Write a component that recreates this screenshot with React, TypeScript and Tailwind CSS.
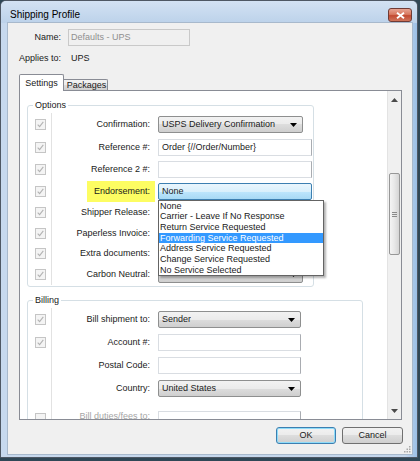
import clsx from "clsx";
import type { ReactNode } from "react";

const endorsements = [
  "None",
  "Carrier - Leave If No Response",
  "Return Service Requested",
  "Forwarding Service Requested",
  "Address Service Requested",
  "Change Service Requested",
  "No Service Selected",
];

function Check({ state }: { state: "on" | "off" | "none" }) {
  if (state === "none") return null;
  return (
    <span className="flex h-[11px] w-[11px] items-center justify-center border border-[#c5c5c5] bg-[#f4f4f4]">
      {state === "on" && (
        <svg width="7" height="7" viewBox="0 0 7 7">
          <path d="M0.7 3.6L2.6 5.6L6.3 0.9" fill="none" stroke="#b3b3b3" strokeWidth="1.1" />
        </svg>
      )}
    </span>
  );
}

function DownArrow({ color = "#000" }: { color?: string }) {
  return (
    <svg width="7" height="4" viewBox="0 0 7 4">
      <path d="M0 0H7L3.5 4Z" fill={color} />
    </svg>
  );
}

function Combo({ value = "", className, open }: { value?: string; className?: string; open?: boolean }) {
  return (
    <div
      className={clsx(
        "flex h-[17px] items-center justify-between rounded-[2px] border pl-[3px] pr-[5px]",
        open
          ? "border-[#3c7fb1] bg-[linear-gradient(#eaf6fd,#d9f0fc_50%,#bee6fd_50%,#a7d9f5)]"
          : "border-[#8e8f8f] bg-[linear-gradient(#f2f2f2,#ebebeb_50%,#dddddd_50%,#cfcfcf)]",
        className
      )}
    >
      <span className="truncate">{value}</span>
      {!open && <DownArrow />}
    </div>
  );
}

function Field({ value = "", className }: { value?: string; className?: string }) {
  return (
    <div
      className={clsx(
        "flex h-[17px] items-center border border-[#d9dde2] border-r-[#a9acb1] bg-white pl-[3px]",
        className
      )}
    >
      {value}
    </div>
  );
}

function Row({
  label,
  h,
  children,
  check = "on",
  highlight,
  bottom,
  muted,
}: {
  label: string;
  h: string;
  children: ReactNode;
  check?: "on" | "off" | "none";
  highlight?: boolean;
  bottom?: boolean;
  muted?: boolean;
}) {
  const align = bottom ? "items-end" : "items-center";
  return (
    <div className={clsx("flex", h)}>
      <div className={clsx("flex w-[23px] pl-[7px]", align, bottom && "pb-[4px]")}>
        <Check state={check} />
      </div>
      <div className={clsx("flex flex-1 border-l border-[#e2e2e2]", align)}>
        <div className={clsx("flex w-[103px] justify-end", bottom && "mb-[6px]")}>
          <span
            className={clsx(
              "flex items-center pr-[5px]",
              highlight && "h-[21px] bg-[#fdfd62] pl-[7px]",
              muted && "text-[#a5a5a5]"
            )}
          >
            {label}
          </span>
        </div>
        <div className="relative ml-[3px]">{children}</div>
      </div>
    </div>
  );
}

function Group({ title, className, children }: { title: string; className: string; children: ReactNode }) {
  return (
    <fieldset className={clsx("rounded-[3px] border border-[#d5dfe5] px-0 pb-[1px] pt-[2px]", className)}>
      <legend className="ml-[5px] px-[2px] leading-[11px]">{title}</legend>
      {children}
    </fieldset>
  );
}

function Button({ label, primary }: { label: string; primary?: boolean }) {
  return (
    <div
      className={clsx(
        "flex h-[17px] items-center justify-center rounded-[3px] border bg-[linear-gradient(#f2f2f2,#ebebeb_50%,#dddddd_50%,#cfcfcf)]",
        primary
          ? "w-[60px] border-[#3c7fb1] shadow-[inset_0_0_0_1px_#8fdcf9]"
          : "w-[61px] border-[#707070]"
      )}
    >
      {label}
    </div>
  );
}

export default function App() {
  return (
    <div className="h-[461px] w-[420px] overflow-hidden bg-[#2f4756] font-['Liberation_Sans',Arial,sans-serif] text-[9px] leading-[11px] text-[#1a1a1a]">
      <div className="flex h-[458px] w-[418px] flex-col rounded-t-[6px] border border-[#4f5864] bg-[linear-gradient(90deg,#c7d9ee,#c3d6ec_97%,#9cc0e6)]">
        {/* title bar */}
        <div className="flex h-[22px] items-start justify-between rounded-t-[5px] bg-[linear-gradient(#d3e2f3,#bcd2ea)]">
          <span className="pl-[9px] pt-[8px] text-[10px] leading-[12px] text-black">Shipping Profile</span>
          <div className="mr-[5px] mt-[7px] flex h-[14px] w-[24px] items-center justify-center rounded-[3px] border border-[#6f3b35] bg-[linear-gradient(#e8a493,#d7785f_45%,#c24a32_55%,#d0745a)]">
            <svg width="9" height="7" viewBox="0 0 9 7">
              <path d="M1 0.8L8 6.2M8 0.8L1 6.2" stroke="#fff" strokeWidth="1.9" />
            </svg>
          </div>
        </div>

        {/* client area */}
        <div className="ml-[7px] flex h-[431px] w-[404px] flex-col bg-[#f0f0f0] shadow-[0_0_0_1px_#a8b9cc]">
          <div className="mt-[6px] flex h-[17px] items-center">
            <span className="w-[53px] text-right">Name:</span>
            <div className="ml-[7px] flex h-[17px] w-[122px] items-center border border-[#c9c9c9] bg-[#f0f0f0] pl-[2px] text-[#8f8f8f]">
              Defaults - UPS
            </div>
          </div>
          <div className="mt-[4px] flex h-[17px] items-center">
            <span className="w-[53px] text-right">Applies to:</span>
            <span className="ml-[10px]">UPS</span>
          </div>

          {/* tabs */}
          <div className="ml-[11px] mt-[7px] flex h-[16px] items-end">
            <div className="relative z-10 -mb-px flex h-[17px] w-[45px] items-center justify-center rounded-t-[2px] border border-b-0 border-[#898c95] bg-white">
              Settings
            </div>
            <div className="flex h-[11px] w-[44px] items-center justify-center rounded-tr-[2px] border border-b-0 border-l-0 border-[#898c95] bg-[linear-gradient(#f2f2f2,#ebebeb_50%,#dddddd_50%,#cfcfcf)] pl-[2px]">
              Packages
            </div>
          </div>

          <div className="ml-[11px] flex h-[330px] w-[383px] border border-[#898c95] bg-white">
            <div className="relative flex-1 overflow-hidden pl-[7px]">
              <Group title="Options" className="mt-[9px] w-[287px]">
                <Row label="Confirmation:" h="h-[23px]">
                  <Combo value="USPS Delivery Confirmation" className="w-[145px]" />
                </Row>
                <Row label="Reference #:" h="h-[22px]">
                  <Field value="Order {//Order/Number}" className="w-[154px]" />
                </Row>
                <Row label="Reference 2 #:" h="h-[22px]">
                  <Field className="w-[154px]" />
                </Row>
                <Row label="Endorsement:" h="h-[22px]" highlight>
                  <Combo value="None" className="w-[154px]" open />
                  <div className="absolute left-0 top-full z-10 w-[166px] border border-[#646464] bg-white shadow-[2px_2px_2px_rgba(0,0,0,0.3)]">
                    {endorsements.map((item, i) => (
                      <div
                        key={item}
                        className={clsx(
                          "h-[10.7px] whitespace-nowrap pl-[1px] leading-[10.7px]",
                          i === 3 && "bg-[#3399ff] text-white"
                        )}
                      >
                        {item}
                      </div>
                    ))}
                  </div>
                </Row>
                <Row label="Shipper Release:" h="h-[21px]">
                  <Combo className="w-[145px]" />
                </Row>
                <Row label="Paperless Invoice:" h="h-[20px]">
                  <Combo className="w-[145px]" />
                </Row>
                <Row label="Extra documents:" h="h-[21px]">
                  <Combo className="w-[145px]" />
                </Row>
                <Row label="Carbon Neutral:" h="h-[21px]">
                  <Combo className="w-[145px]" />
                </Row>
              </Group>

              <Group title="Billing" className="mt-[8px] w-[336px]">
                <Row label="Bill shipment to:" h="h-[23px]">
                  <Combo value="Sender" className="w-[143px]" />
                </Row>
                <Row label="Account #:" h="h-[23px]">
                  <Field className="w-[143px]" />
                </Row>
                <Row label="Postal Code:" h="h-[23px]" check="none">
                  <Field className="w-[143px]" />
                </Row>
                <Row label="Country:" h="h-[23px]" check="none">
                  <Combo value="United States" className="w-[143px]" />
                </Row>
                <Row label="Bill duties/fees to:" h="h-[28px]" check="off" bottom muted>
                  <Field className="w-[143px]" />
                </Row>
              </Group>
            </div>

            {/* vertical scrollbar */}
            <div className="flex w-[14px] flex-col border-l border-[#e3e3e3] bg-[#f0f0f0]">
              <div className="flex h-[17px] items-center justify-center">
                <svg width="7" height="4" viewBox="0 0 7 4">
                  <path d="M0 4H7L3.5 0Z" fill="#4a4a4a" />
                </svg>
              </div>
              <div className="flex-1 px-[1px]">
                <div className="mt-[65px] flex h-[82px] flex-col items-center justify-center gap-[1px] rounded-[2px] border border-[#979797] bg-[linear-gradient(90deg,#f4f4f4,#e9e9e9_45%,#d5d5d5)]">
                  <span className="h-px w-[5px] bg-[#8a8a8a]" />
                  <span className="h-px w-[5px] bg-[#8a8a8a]" />
                  <span className="h-px w-[5px] bg-[#8a8a8a]" />
                </div>
              </div>
              <div className="flex h-[17px] items-center justify-center">
                <DownArrow color="#4a4a4a" />
              </div>
            </div>
          </div>

          <div className="mt-[7px] flex justify-end gap-[6px] pr-[9px]">
            <Button label="OK" primary />
            <Button label="Cancel" />
          </div>

          {/* size grip */}
          <div className="flex flex-1 items-end justify-end pb-[1px] pr-[1px]">
            <svg width="7" height="7" viewBox="0 0 7 7">
              <g fill="#a8a8a8">
                <rect x="5" y="0" width="1.5" height="1.5" />
                <rect x="2.5" y="2.5" width="1.5" height="1.5" />
                <rect x="5" y="2.5" width="1.5" height="1.5" />
                <rect x="0" y="5" width="1.5" height="1.5" />
                <rect x="2.5" y="5" width="1.5" height="1.5" />
                <rect x="5" y="5" width="1.5" height="1.5" />
              </g>
            </svg>
          </div>
        </div>
      </div>
    </div>
  );
}
